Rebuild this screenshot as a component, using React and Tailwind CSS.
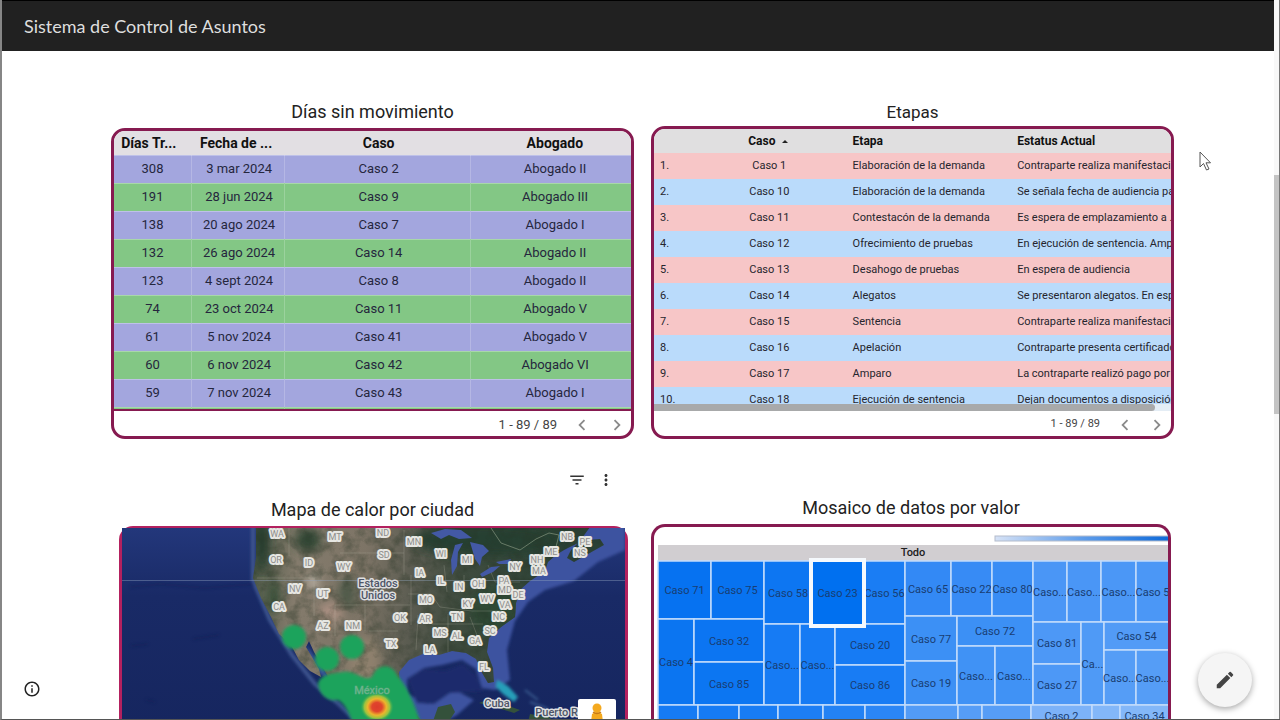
import React from 'react';
import { MdChevronLeft, MdChevronRight, MdEdit, MdFilterList, MdInfoOutline, MdMoreVert } from 'react-icons/md';

const dias = [
  ['308', '3 mar 2024', 'Caso 2', 'Abogado II'],
  ['191', '28 jun 2024', 'Caso 9', 'Abogado III'],
  ['138', '20 ago 2024', 'Caso 7', 'Abogado I'],
  ['132', '26 ago 2024', 'Caso 14', 'Abogado II'],
  ['123', '4 sept 2024', 'Caso 8', 'Abogado II'],
  ['74', '23 oct 2024', 'Caso 11', 'Abogado V'],
  ['61', '5 nov 2024', 'Caso 41', 'Abogado V'],
  ['60', '6 nov 2024', 'Caso 42', 'Abogado VI'],
  ['59', '7 nov 2024', 'Caso 43', 'Abogado I'],
  ['', '', '', '']
];

const etapas = [
  ['Caso 1', 'Elaboración de la demanda', 'Contraparte realiza manifestaci...'],
  ['Caso 10', 'Elaboración de la demanda', 'Se señala fecha de audiencia pa'],
  ['Caso 11', 'Contestacón de la demanda', 'Es espera de emplazamiento a ...'],
  ['Caso 12', 'Ofrecimiento de pruebas', 'En ejecución de sentencia. Amp'],
  ['Caso 13', 'Desahogo de pruebas', 'En espera de audiencia'],
  ['Caso 14', 'Alegatos', 'Se presentaron alegatos. En esp'],
  ['Caso 15', 'Sentencia', 'Contraparte realiza manifestaci...'],
  ['Caso 16', 'Apelación', 'Contraparte presenta certificado'],
  ['Caso 17', 'Amparo', 'La contraparte realizó pago por'],
  ['Caso 18', 'Ejecución de sentencia', 'Dejan documentos a disposición']
];

// x1, y1, x2, y2, etiqueta, color
const mosaico = [
  [658, 561, 711, 619, 'Caso 71', '#0672f1'],
  [711, 561, 764, 619, 'Caso 75', '#0873f1'],
  [658, 619, 694, 705, 'Caso 4', '#0b75f1'],
  [694, 619, 764, 662, 'Caso 32', '#0c75f2'],
  [694, 662, 764, 705, 'Caso 85', '#0c76f2'],
  [764, 561, 812, 624, 'Caso 58', '#0d76f2'],
  [864, 561, 905, 624, 'Caso 56', '#1a7df4'],
  [764, 624, 800, 705, 'Caso...', '#167bf4'],
  [800, 624, 835, 705, 'Caso...', '#167bf4'],
  [835, 624, 905, 665, 'Caso 20', '#167bf4'],
  [835, 665, 905, 705, 'Caso 86', '#187cf4'],
  [905, 561, 951, 616, 'Caso 65', '#3389f5'],
  [951, 561, 992, 616, 'Caso 22', '#378bf5'],
  [992, 561, 1033, 616, 'Caso 80', '#398df5'],
  [905, 616, 957, 661, 'Caso 77', '#3c90f5'],
  [905, 661, 957, 705, 'Caso 19', '#3c90f5'],
  [957, 616, 1033, 646, 'Caso 72', '#3c90f5'],
  [957, 646, 995, 705, 'Caso...', '#4092f5'],
  [995, 646, 1033, 705, 'Caso...', '#4092f5'],
  [1033, 561, 1067, 622, 'Caso...', '#4a96f6'],
  [1067, 561, 1101, 622, 'Caso...', '#4a96f6'],
  [1101, 561, 1136, 622, 'Caso...', '#4b97f6'],
  [1136, 561, 1169, 622, 'Caso 5', '#4b97f6'],
  [1033, 622, 1081, 664, 'Caso 81', '#4d98f6'],
  [1033, 664, 1081, 705, 'Caso 27', '#4d98f6'],
  [1081, 622, 1104, 705, 'Ca...', '#4f9af6'],
  [1104, 622, 1169, 650, 'Caso 54', '#529bf6'],
  [1104, 650, 1136, 705, 'Caso...', '#559df6'],
  [1136, 650, 1169, 705, 'Caso...', '#559df6'],
  [658, 705, 698, 750, '', '#167bf4'],
  [698, 705, 739, 750, '', '#167bf4'],
  [739, 705, 778, 750, '', '#187cf4'],
  [778, 705, 823, 750, '', '#1d7ef4'],
  [823, 705, 865, 750, '', '#2382f4'],
  [865, 705, 905, 750, '', '#2b86f5'],
  [905, 705, 958, 741, 'Caso 38', '#529bf6'],
  [958, 705, 982, 750, '', '#569df6'],
  [982, 705, 1031, 741, 'Caso 44', '#569df6'],
  [1031, 705, 1092, 727, 'Caso 2', '#7cb2f8'],
  [1092, 705, 1120, 750, '', '#83b7f8'],
  [1120, 705, 1169, 727, 'Caso 34', '#83b7f8'],
  [811, 560, 864, 626, 'Caso 23', '#0070f0']
];

const estados = [
  ['WA', 277, 534], ['OR', 276, 560], ['ID', 309, 563], ['MT', 335, 537], ['WY', 344, 567],
  ['NV', 295, 589], ['UT', 323, 594], ['CA', 279, 607], ['AZ', 323, 626], ['NM', 353, 626],
  ['ND', 383, 533], ['SD', 384, 555], ['MN', 414, 542], ['WI', 441, 554], ['MI', 467, 560],
  ['IA', 420, 573], ['IL', 441, 581], ['IN', 459, 587], ['OH', 478, 584], ['PA', 504, 581],
  ['MD', 505, 590], ['DE', 518, 595], ['MO', 426, 600], ['KY', 468, 604], ['WV', 487, 599],
  ['VA', 505, 605], ['OK', 400, 618], ['AR', 425, 619], ['TN', 457, 617], ['NC', 499, 617],
  ['SC', 490, 631], ['GA', 475, 641], ['AL', 457, 636], ['MS', 440, 633], ['LA', 430, 650],
  ['TX', 391, 644], ['FL', 484, 667], ['NY', 515, 567], ['NH', 537, 560], ['MA', 539, 571],
  ['ME', 551, 552], ['NB', 567, 537], ['PE', 585, 542], ['NS', 580, 553]
];

const TIERRA = 'M256 520 L256 558 L253 578 L261 598 L271 617 L279 634 L291 645 L299 660 L310 671 L321 677 L319 669 L312 657 L306 647 L309 641 L314 652 L322 666 L330 680 L340 695 L356 711 L376 725 L425 725 L411 708 L400 690 L399 672 L409 660 L425 653 L439 655 L452 651 L466 653 L476 659 L481 671 L488 683 L494 682 L493 668 L487 652 L489 638 L501 627 L515 617 L516 603 L520 590 L530 581 L545 571 L548 562 L556 555 L564 550 L576 544 L588 540 L600 539 L604 545 L588 554 L574 562 L567 558 L571 550 L578 543 L585 534 L595 520 Z';

const Paginacion = ({ textClass, arrowsClass }) => (
  <div className="flex h-[25px] items-center justify-end pt-0.5 text-[#444]">
    <span className={textClass}>1 - 89 / 89</span>
    <div className={arrowsClass}>
      <button aria-label="Anterior" className="text-[#8a8a8a]"><MdChevronLeft size={22} /></button>
      <button aria-label="Siguiente" className="text-[#8a8a8a]"><MdChevronRight size={22} /></button>
    </div>
  </div>
);

const DiasTable = () => (
  <div className="mt-1 overflow-hidden rounded-[14px] border-[3px] border-[#861a50] bg-white">
    <div className="h-[280px] overflow-hidden border-b-2 border-[#861a50]">
      <table className="w-full table-fixed border-collapse text-center text-[13px] text-[#25263d]">
        <colgroup>
          <col className="w-[15%]" />
          <col className="w-[18%]" />
          <col className="w-[36%]" />
          <col className="w-[31%]" />
        </colgroup>
        <thead>
          <tr className="h-6 bg-[#e2dfe3] text-sm leading-5 text-[#111]">
            <th className="p-0 pr-2">Días Tr...</th>
            <th className="p-0 pr-1">Fecha de ...</th>
            <th className="p-0 pl-0.5">Caso</th>
            <th className="p-0 pl-2">Abogado</th>
          </tr>
        </thead>
        <tbody>
          {dias.map((fila, i) => (
            <tr key={i} className={i % 2 === 0 ? 'h-7 bg-[#a3a6de]' : 'h-7 bg-[#83c785]'}>
              {fila.map((valor, j) => (
                <td key={j} className="border-t border-r border-t-white/30 border-r-white/20 p-0 pl-0.5 leading-5 first:pl-0 last:border-r-0 last:pl-2">{valor}</td>
              ))}
            </tr>
          ))}
        </tbody>
      </table>
    </div>
    <Paginacion textClass="text-[13px]" arrowsClass="ml-[14px] mr-[3px] flex gap-[13px]" />
  </div>
);

const EtapasTable = () => (
  <div className="mt-0.5 overflow-hidden rounded-[14px] border-[3px] border-[#861a50] bg-white">
    <div className="relative h-[282px] overflow-hidden">
      <table className="w-full table-fixed border-collapse text-left text-[11px] text-[#25252d]">
        <colgroup>
          <col className="w-[12%]" />
          <col className="w-[21%]" />
          <col className="w-[33%]" />
          <col className="w-[34%]" />
        </colgroup>
        <thead>
          <tr className="h-6 bg-[#e0dfe0] text-xs leading-4 text-[#111]">
            <th className="p-0"></th>
            <th className="p-0 pr-1 text-center">
              Caso <span className="ml-1 inline-block border-x-[3px] border-b-[3px] border-x-transparent border-b-[#222] align-middle"></span>
            </th>
            <th className="p-0 pl-7">Etapa</th>
            <th className="p-0 pl-[22px]">Estatus Actual</th>
          </tr>
        </thead>
        <tbody>
          {etapas.map(([caso, etapa, estatus], i) => (
            <tr key={caso} className={i % 2 === 0 ? 'h-[26px] bg-[#f7c6c7]' : 'h-[26px] bg-[#badbfb]'}>
              <td className="p-0 pl-1.5 leading-4">{i + 1}.</td>
              <td className="p-0 pr-0.5 text-center leading-4">{caso}</td>
              <td className="p-0 pl-7 leading-4 whitespace-nowrap">{etapa}</td>
              <td className="p-0 pl-[22px] leading-4 whitespace-nowrap">{estatus}</td>
            </tr>
          ))}
        </tbody>
      </table>
      <div className="absolute bottom-0 left-0 h-[7px] w-full bg-[#e4edf5]">
        <div className="h-full w-[97%] rounded-r-full bg-[#a8a9aa]"></div>
      </div>
    </div>
    <Paginacion textClass="text-[11px]" arrowsClass="ml-[14px] mr-[3px] flex gap-2.5" />
  </div>
);

const Mapa = () => (
  <div className="relative mt-1 mr-1.5 ml-2 rounded-t-[14px] border-x-[3px] border-t-2 border-[#b3215f]">
    <svg viewBox="122 528 503 196" preserveAspectRatio="xMidYMin slice" className="block h-[196px] w-full" role="img" aria-label="Mapa de calor por ciudad">
      <defs>
        <linearGradient id="oceano" x1="0" y1="0" x2="0" y2="1">
          <stop offset="0" stopColor="#23377b" />
          <stop offset="0.35" stopColor="#192a66" />
          <stop offset="1" stopColor="#16265f" />
        </linearGradient>
        <linearGradient id="tierra" x1="254" x2="560" y1="560" y2="590" gradientUnits="userSpaceOnUse">
          <stop offset="0" stopColor="#4b5745" />
          <stop offset="0.14" stopColor="#847b6c" />
          <stop offset="0.36" stopColor="#7d7466" />
          <stop offset="0.52" stopColor="#5b5c51" />
          <stop offset="0.68" stopColor="#3f4c3f" />
          <stop offset="1" stopColor="#2b4135" />
        </linearGradient>
        <radialGradient id="calor">
          <stop offset="0" stopColor="#dc3c2c" />
          <stop offset="0.3" stopColor="#e0452c" />
          <stop offset="0.55" stopColor="#edb52c" />
          <stop offset="0.75" stopColor="#9ac33f" />
          <stop offset="1" stopColor="#1da35c" stopOpacity="0" />
        </radialGradient>
        <filter id="suave" x="-20%" y="-20%" width="140%" height="140%">
          <feGaussianBlur stdDeviation="1.6" />
        </filter>
        <filter id="mancha" x="-50%" y="-50%" width="200%" height="200%">
          <feGaussianBlur stdDeviation="5" />
        </filter>
        <filter id="relieve" x="0" y="0" width="100%" height="100%" colorInterpolationFilters="sRGB">
          <feTurbulence type="fractalNoise" baseFrequency="0.09" numOctaves="4" seed="7" />
          <feColorMatrix values="0 0 0 0 0.16  0 0 0 0 0.21  0 0 0 0 0.15  2.4 0 0 0 -0.95" />
        </filter>
        <clipPath id="costa"><path d={TIERRA} /></clipPath>
      </defs>
      <rect x="122" y="528" width="503" height="196" fill="url(#oceano)" />
      {/* aguas someras */}
      <g filter="url(#suave)">
        <path d="M253 520 L253 580 L270 620 L292 655 L315 684 L340 705 L360 725" fill="none" stroke="#3c558f" strokeWidth="4" />
        <path d="M625 518 L625 550 L598 562 L574 581 L545 590 L528 602 L515 621 L507 650 L510 680 L495 690 L482 688 L476 669 L462 660 L442 665 L424 668 L407 679 L407 694 L427 704 L455 690 L474 700 L457 715 L440 724 L405 724 L395 682 L402 654 L475 644 L515 575 L575 530 Z" fill="#3c52a0" />
        <path d="M408 680 L422 669 L445 671 L463 664 L476 676 L484 691 L468 692 L450 693 L434 704 L417 703 Z" fill="#1c2c6c" />
        <path d="M497 680 L508 686 L518 697 L514 702 L503 694 L496 687 Z" fill="#279fb9" />
        <path d="M530 702 L546 708 L558 720 M525 690 L538 700" fill="none" stroke="#4e7cad" strokeWidth="2" opacity="0.6" />
        <path d="M306 644 L314 656 L322 666 L332 682 L320 674 L309 655 Z" fill="#3a5597" />
      </g>
      <path d={TIERRA} fill="url(#tierra)" />
      <g clipPath="url(#costa)">
        <g filter="url(#mancha)">
          <ellipse cx="262" cy="540" rx="7" ry="32" fill="#263d2d" />
          <ellipse cx="274" cy="597" rx="5" ry="17" fill="#2e4a31" />
          <ellipse cx="308" cy="540" rx="13" ry="12" fill="#334634" />
          <ellipse cx="331" cy="612" rx="12" ry="10" fill="#a98f81" />
          <ellipse cx="313" cy="582" rx="6" ry="8" fill="#b7aea2" />
          <ellipse cx="347" cy="594" rx="9" ry="16" fill="#4f5a4a" />
          <ellipse cx="364" cy="660" rx="17" ry="24" fill="#8e806d" />
          <ellipse cx="487" cy="540" rx="75" ry="16" fill="#263f30" />
          <ellipse cx="495" cy="609" rx="25" ry="23" fill="#2f4936" />
        </g>
        <rect x="250" y="520" width="380" height="204" filter="url(#relieve)" opacity="0.4" />
        <path d="M289 528 V556 M257 578 H315 M340 553 H404 M314 578 V616 M335 605 H410 M404 530 V575 M335 605 V636 M365 605 V631 M411 575 V625 M369 631 H398 M416 650 L418 615 M448 614 V652 M432 624 H483 M408 594 L431 594 L440 607 L472 611 L502 611 M444 565 L447 592 M464 575 V592 M488 565 L495 582 L520 582 M470 617 L480 643" fill="none" stroke="#b6b7a9" strokeWidth="1" opacity="0.25" />
        <path d="M491 528 L501 543 L520 550 L536 539 L549 533 L559 535 L554 555" fill="none" stroke="#8b9b84" strokeWidth="1" opacity="0.65" />
      </g>
      {/* grandes lagos */}
      <path d="M431 533 L445 529 L461 530 L472 538 L459 539 L449 535 L441 539 Z M455 545 L463 543 L458 552 L457 566 L452 575 L451 560 Z M470 542 L483 545 L489 551 L482 557 L480 566 L475 559 Z M480 574 L491 567 L500 566 L493 572 L482 577 Z M496 562 L511 559 L509 564 L499 564 Z" fill="#4359a5" />
      <path d="M479 703 L489 699 L500 703 L520 710 L514 713 L495 707 Z M530 714 L549 717 L557 724 L528 722 Z M438 707 L451 704 L455 712 L447 724 L432 724 Z" fill="#34513b" />
      <path d="M122 580.5 H625" stroke="#96a9c2" strokeWidth="1" opacity="0.4" />
      <path d="M130 587 L160 584 L205 588 L253 584 M131 646 L148 644 M193 639 L219 635 M146 700 L155 702" fill="none" stroke="#0d1c50" strokeWidth="2" opacity="0.45" filter="url(#suave)" />
      {/* capa de calor */}
      <g fill="#1da35c" filter="url(#suave)">
        <circle cx="294" cy="637" r="12" />
        <circle cx="327" cy="659" r="12" />
        <circle cx="352" cy="647" r="12" />
        <path d="M318 684 C320 674 334 673 343 672 C356 670 363 682 372 677 C378 662 392 664 397 675 C405 684 412 696 421 724 L354 724 C348 714 347 705 338 700 C327 702 319 694 318 684 Z" />
      </g>
      <ellipse cx="377" cy="707" rx="17" ry="15" fill="url(#calor)" />
      <g fontFamily="Roboto, sans-serif" textAnchor="middle" paintOrder="stroke" strokeLinejoin="round">
        {estados.map(([nombre, x, y]) => (
          <text key={nombre} x={x} y={y + 3} fontSize="9" fill="#8d8d8b" stroke="#e6e6e2" strokeWidth="4">{nombre}</text>
        ))}
        <g fontSize="11" fontWeight="500" fill="#4e5567" stroke="#dedfe0" strokeWidth="3">
          <text x="378" y="587">Estados</text>
          <text x="378" y="599">Unidos</text>
          <text x="497" y="707">Cuba</text>
          <text x="564" y="716">Puerto Rico</text>
        </g>
        <text x="372" y="694" fontSize="11" fill="#6fb58d" stroke="#44a573" strokeWidth="1">México</text>
      </g>
    </svg>
    <button aria-label="Street View" className="absolute right-[9px] bottom-0 flex h-[25px] w-[38px] justify-center overflow-hidden rounded-xs bg-white pt-1">
      <svg viewBox="0 0 16 26" className="h-[26px] w-4">
        <circle cx="8" cy="5" r="4.5" fill="#f4a91f" />
        <path d="M3 11 Q8 7 13 11 L14 19 L11 20 V26 H5 V20 L2 19 Z" fill="#f4a91f" />
        <path d="M4 9 Q8 12 12 9" stroke="#c97a13" strokeWidth="1.5" fill="none" />
      </svg>
    </button>
  </div>
);

const Mosaico = () => (
  <div className="mt-1 overflow-hidden rounded-t-[14px] border-x-[3px] border-t-[3px] border-[#861a50]">
    <svg viewBox="654 527 515 200" preserveAspectRatio="xMinYMin slice" className="block h-[200px] w-full" role="img" aria-label="Mosaico de datos por valor">
      <defs>
        <linearGradient id="escala">
          <stop offset="0" stopColor="#d6e2f6" />
          <stop offset="0.5" stopColor="#5b9bea" />
          <stop offset="1" stopColor="#0866d8" />
        </linearGradient>
      </defs>
      <rect x="995" y="536" width="180" height="5" fill="url(#escala)" stroke="#b4bccb" strokeWidth="1" />
      <rect x="658" y="545" width="511" height="16" fill="#d1ced1" />
      <g fontFamily="Roboto, sans-serif" fontSize="11" textAnchor="middle">
        <text x="913" y="556" fill="#202020" fontWeight="500">Todo</text>
        {mosaico.map(([x1, y1, x2, y2, label, color], i) => {
          const selected = label === 'Caso 23';
          return (
            <g key={i}>
              <rect x={x1} y={y1} width={x2 - x1} height={y2 - y1} fill={color} stroke={selected ? '#f5f9fd' : '#c2dcfb'} strokeWidth={selected ? 4 : 1.5} />
              <text x={(x1 + x2) / 2} y={(y1 + y2) / 2 + 4} fill="#193d72">{label}</text>
            </g>
          );
        })}
      </g>
    </svg>
  </div>
);

const App = () => {
  return (
    <div className="relative flex h-screen flex-col overflow-hidden border-b border-l-2 border-b-[#555] border-l-[#868686] bg-white font-[Roboto,sans-serif] text-[#222]">
      <div className="flex min-h-0 flex-1">
        <div className="min-w-0 flex-1">
          <header className="flex h-[51px] items-center border-t border-black bg-[#212121] pl-[22px]">
            <h1 className="font-[Lato,sans-serif] text-lg leading-6 text-[#dedede]">Sistema de Control de Asuntos</h1>
          </header>

          <main className="grid grid-cols-2 items-start gap-x-[17px] gap-y-[29px] pt-[49px] pr-[100px] pl-[109px]">
            <section>
              <h2 className="text-center text-lg leading-6">Días sin movimiento</h2>
              <DiasTable />
            </section>
            <section>
              <h2 className="text-center text-[17px] leading-6">Etapas</h2>
              <EtapasTable />
            </section>
            <section>
              <div className="flex h-6 items-center justify-end gap-[11px] pr-[19px] text-[#333]">
                <button aria-label="Filtrar"><MdFilterList size={18} /></button>
                <button aria-label="Más opciones"><MdMoreVert size={18} /></button>
              </div>
              <h2 className="mt-1.5 text-center text-lg leading-6">Mapa de calor por ciudad</h2>
              <Mapa />
            </section>
            <section className="pt-7 pr-[3px]">
              <h2 className="text-center text-lg leading-6">Mosaico de datos por valor</h2>
              <Mosaico />
            </section>
          </main>
        </div>

        {/* Barra de desplazamiento */}
        <div className="w-1.5 border-r border-[#777] bg-[#f8f8f8] pt-[175px]">
          <div className="h-[239px] bg-[#c4c4c4]"></div>
        </div>
      </div>

      <button aria-label="Información" className="absolute bottom-[21px] left-[21px] text-[#222]">
        <MdInfoOutline size={18} />
      </button>
      <button aria-label="Editar" className="absolute right-7 bottom-3 flex size-[54px] items-center justify-center rounded-full bg-[#f5f5f5] text-[#444] shadow-[0_2px_6px_rgba(0,0,0,0.35)]">
        <MdEdit size={22} />
      </button>

      {/* Cursor */}
      <svg viewBox="0 0 12 20" className="absolute top-[151px] left-[1197px] h-5 w-3" aria-hidden="true">
        <path d="M1 1 V16 L4.500 12.500 L7.500 19 L10 18 L7 11.800 H11.500 Z" fill="white" stroke="#555" strokeWidth="1" />
      </svg>
    </div>
  );
};

export default App;
